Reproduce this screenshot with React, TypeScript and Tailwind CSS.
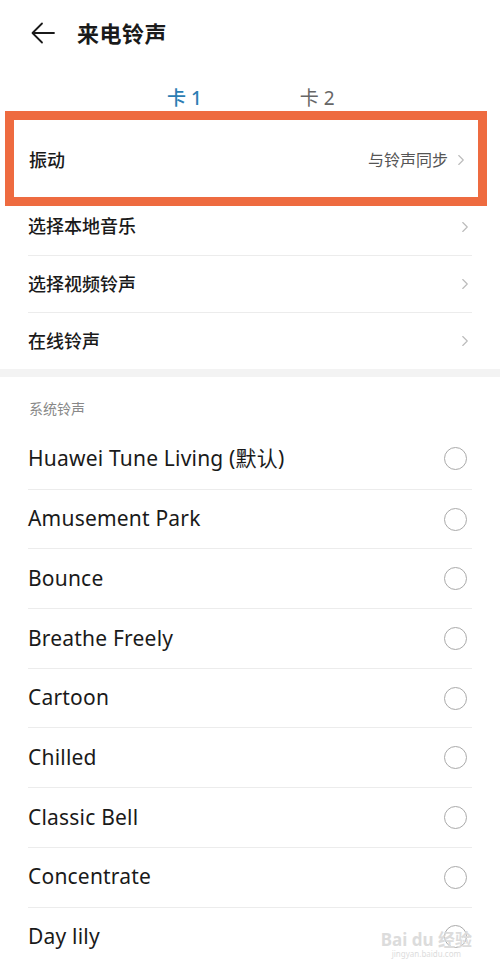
import { ChevronRight } from "lucide-react";

const menuRows = ["选择本地音乐", "选择视频铃声", "在线铃声"];

const ringtones = [
  "Huawei Tune Living (默认)",
  "Amusement Park",
  "Bounce",
  "Breathe Freely",
  "Cartoon",
  "Chilled",
  "Classic Bell",
  "Concentrate",
  "Day lily",
];

function BackArrow() {
  return (
    <svg width="24" height="22" viewBox="0 0 24 22" fill="none">
      <path d="M23 11H2M11 1.5L1.5 11L11 20.5" stroke="#1a1a1a" strokeWidth="1.8" strokeLinecap="round" strokeLinejoin="round" />
    </svg>
  );
}

export default function App() {
  return (
    <div
      className="w-[500px] h-[961px] overflow-hidden bg-white text-[#1a1a1a]"
      style={{ fontFamily: '"Noto Sans", "Noto Sans CJK SC", sans-serif' }}
    >
      {/* Header */}
      <div className="h-[66px] flex items-center pl-[31px]">
        <BackArrow />
        <h1 className="ml-[22px] text-[22px] font-bold tracking-[0.5px]">来电铃声</h1>
      </div>

      {/* SIM tabs */}
      <div className="h-[56px] flex items-end pb-[10px]">
        <div className="ml-[167px] text-[19px] font-medium text-[#2c7db3]">卡 1</div>
        <div className="ml-[98px] text-[19px] text-[#666]">卡 2</div>
      </div>

      {/* Vibration row with highlight */}
      <div className="relative">
        <div className="h-[76px] flex items-center justify-between pl-[29px] pr-[30px]">
          <span className="text-[18px] font-medium">振动</span>
          <div className="flex items-center gap-[4px]">
            <span className="text-[16px] text-[#555]">与铃声同步</span>
            <ChevronRight size={18} strokeWidth={1.5} className="text-[#bbb]" />
          </div>
        </div>
        <div className="absolute left-[5px] right-[13px] top-[-11px] bottom-[-8px] border-[9px] border-[#ee6b40]" />
      </div>

      {/* Menu rows */}
      <div>
        {menuRows.map((label, i) => (
          <div
            key={label}
            className={`mx-[28px] h-[57px] flex items-center justify-between ${i === 0 ? "" : "border-t border-[#ececec]"}`}
          >
            <span className="text-[18px] font-medium">{label}</span>
            <ChevronRight size={18} strokeWidth={1.5} className="text-[#bbb] mr-[-2px]" />
          </div>
        ))}
      </div>

      <div className="h-[8px] bg-[#f3f3f3]" />

      {/* System ringtones */}
      <div className="h-[52px] pl-[29px] pt-[21px] text-[14px] text-[#888]">系统铃声</div>

      <div className="relative">
        {ringtones.map((name, i) => (
          <div
            key={name}
            className={`mx-[28px] h-[59.7px] flex items-center justify-between ${i === 0 ? "" : "border-t border-[#ececec]"}`}
          >
            <span className="text-[21px] tracking-[0.2px]">{name}</span>
            <div className="w-[23px] h-[23px] rounded-full border-[1.5px] border-[#aaa] mr-[5px]" />
          </div>
        ))}
        <div className="absolute right-[28px] bottom-[8px] flex flex-col items-center gap-[2px] leading-none text-[#dcdcdc] pointer-events-none">
          <span className="text-[17px] font-bold">Bai du 经验</span>
          <span className="text-[8px]">jingyan.baidu.com</span>
        </div>
      </div>
    </div>
  );
}
